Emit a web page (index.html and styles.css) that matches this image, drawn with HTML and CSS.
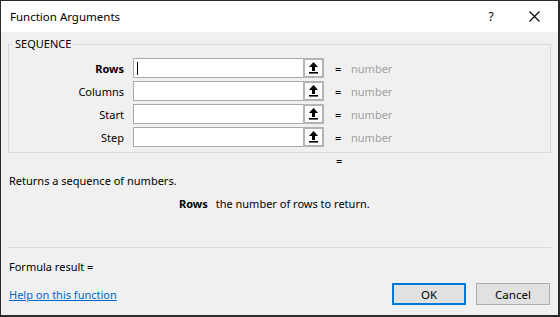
FILE: index.html
```html
<!DOCTYPE html>
<html lang="en">
<head>
    <meta charset="UTF-8">
    <title>Function Arguments</title>
    <link rel="stylesheet" href="styles.css">
</head>
<body>

    <div class="window">
        <div class="titlebar">
            <span class="title">Function Arguments</span>
            <span class="help-btn">?</span>
            <span class="close-btn">
                <svg width="11" height="11" viewBox="0 0 11 11"><path d="M0.5 0.5 L10.5 10.5 M10.5 0.5 L0.5 10.5" stroke="#000" stroke-width="1.1" fill="none"/></svg>
            </span>
        </div>

        <div class="content">
            <fieldset class="group">
                <legend>SEQUENCE</legend>
                <div class="arg-row">
                    <label class="arg-label bold">Rows</label>
                    <div class="arg-input"><span class="caret"></span></div>
                    <div class="ref-btn"><svg width="11" height="12" viewBox="0 0 11 12"><path d="M5.5 0 L10 5 L7 5 L7 9 L4 9 L4 5 L1 5 Z" fill="#000"/><rect x="1" y="10" width="9" height="1.6" fill="#000"/></svg></div>
                    <span class="eq">=</span>
                    <span class="arg-value">number</span>
                </div>
                <div class="arg-row">
                    <label class="arg-label">Columns</label>
                    <div class="arg-input"></div>
                    <div class="ref-btn"><svg width="11" height="12" viewBox="0 0 11 12"><path d="M5.5 0 L10 5 L7 5 L7 9 L4 9 L4 5 L1 5 Z" fill="#000"/><rect x="1" y="10" width="9" height="1.6" fill="#000"/></svg></div>
                    <span class="eq">=</span>
                    <span class="arg-value">number</span>
                </div>
                <div class="arg-row">
                    <label class="arg-label">Start</label>
                    <div class="arg-input"></div>
                    <div class="ref-btn"><svg width="11" height="12" viewBox="0 0 11 12"><path d="M5.5 0 L10 5 L7 5 L7 9 L4 9 L4 5 L1 5 Z" fill="#000"/><rect x="1" y="10" width="9" height="1.6" fill="#000"/></svg></div>
                    <span class="eq">=</span>
                    <span class="arg-value">number</span>
                </div>
                <div class="arg-row">
                    <label class="arg-label">Step</label>
                    <div class="arg-input"></div>
                    <div class="ref-btn"><svg width="11" height="12" viewBox="0 0 11 12"><path d="M5.5 0 L10 5 L7 5 L7 9 L4 9 L4 5 L1 5 Z" fill="#000"/><rect x="1" y="10" width="9" height="1.6" fill="#000"/></svg></div>
                    <span class="eq">=</span>
                    <span class="arg-value">number</span>
                </div>
            </fieldset>

            <div class="result-eq">=</div>
            <div class="description">Returns a sequence of numbers.</div>
            <div class="arg-help">
                <span class="arg-help-name">Rows</span>
                <span class="arg-help-text">the number of rows to return.</span>
            </div>

            <div class="separator"></div>

            <div class="formula">Formula result =</div>

            <div class="footer">
                <a href="#" class="help-link">Help on this function</a>
                <div class="buttons">
                    <button class="dlg-btn default">OK</button>
                    <button class="dlg-btn">Cancel</button>
                </div>
            </div>
        </div>
    </div>

</body>
</html>
```

FILE: styles.css
```css
* {
    box-sizing: border-box;
}
body {
    margin: 0;
    font-family: "Noto Sans", "Open Sans", sans-serif;
    font-size: 11px;
    color: #000;
    background: #f0f0f0;
}
.window {
    width: 560px;
    height: 317px;
    border: 1px solid #2b2b2b;
    border-right-width: 2px;
    border-bottom-width: 2px;
    background: #f0f0f0;
    display: flex;
    flex-direction: column;
}
.titlebar {
    height: 31px;
    background: #fff;
    display: flex;
    align-items: center;
    padding-left: 9px;
}
.title {
    flex: 1;
    font-size: 11.5px;
}
.help-btn {
    width: 14px;
    margin-right: 31px;
    text-align: center;
    font-size: 12px;
}
.close-btn {
    width: 11px;
    height: 11px;
    margin-right: 18px;
    display: flex;
}
.content {
    flex: 1;
    padding: 0 7px;
    display: flex;
    flex-direction: column;
}
.group {
    margin: 4px 0 0 0;
    padding: 6px 0 5px 0;
    border: 1px solid #d9d9d9;
    min-width: 0;
}
legend {
    margin-left: 4px;
    padding: 0 2px;
    line-height: 16px;
}
.arg-row {
    display: grid;
    grid-template-columns: 115px 179px 21px 27px auto;
    height: 20px;
    align-items: center;
    margin-bottom: 3px;
}
.arg-row:last-child {
    margin-bottom: 0;
}
.arg-label {
    text-align: right;
}
.arg-label.bold {
    font-weight: bold;
}
.arg-input {
    height: 20px;
    margin-left: 9px;
    background: #fff;
    border: 1px solid #a9a9a9;
    border-right: none;
    display: flex;
    align-items: center;
    padding-left: 3px;
}
.caret {
    width: 1px;
    height: 13px;
    background: #000;
}
.ref-btn {
    height: 20px;
    border: 2px solid #b4b4b4;
    background: #fbfbfb;
    display: flex;
    align-items: center;
    justify-content: center;
}
.eq {
    padding-left: 11px;
}
.arg-value {
    color: #a0a0a0;
}
.result-eq {
    line-height: 16px;
    padding-left: 328px;
}
.description {
    margin-top: 4px;
    line-height: 16px;
    padding-left: 1px;
}
.arg-help {
    margin-top: 7px;
    line-height: 16px;
    padding-left: 171px;
}
.arg-help-name {
    font-weight: bold;
    margin-right: 5px;
}
.separator {
    margin-top: 35px;
    border-top: 1px solid #dadada;
}
.formula {
    margin-top: 11px;
    line-height: 16px;
    padding-left: 1px;
}
.footer {
    margin-top: 8px;
    display: flex;
    justify-content: space-between;
    align-items: flex-start;
    padding-left: 1px;
}
.help-link {
    margin-top: 4px;
    line-height: 16px;
    color: #0066cc;
    text-decoration: underline;
}
.buttons {
    display: flex;
    gap: 10px;
    margin-right: 1px;
}
.dlg-btn {
    width: 74px;
    height: 22px;
    font-family: inherit;
    font-size: 11.5px;
    background: #e1e1e1;
    border: 1px solid #adadad;
    padding: 0;
    color: #000;
}
.dlg-btn.default {
    border: 2px solid #0078d7;
}
```
